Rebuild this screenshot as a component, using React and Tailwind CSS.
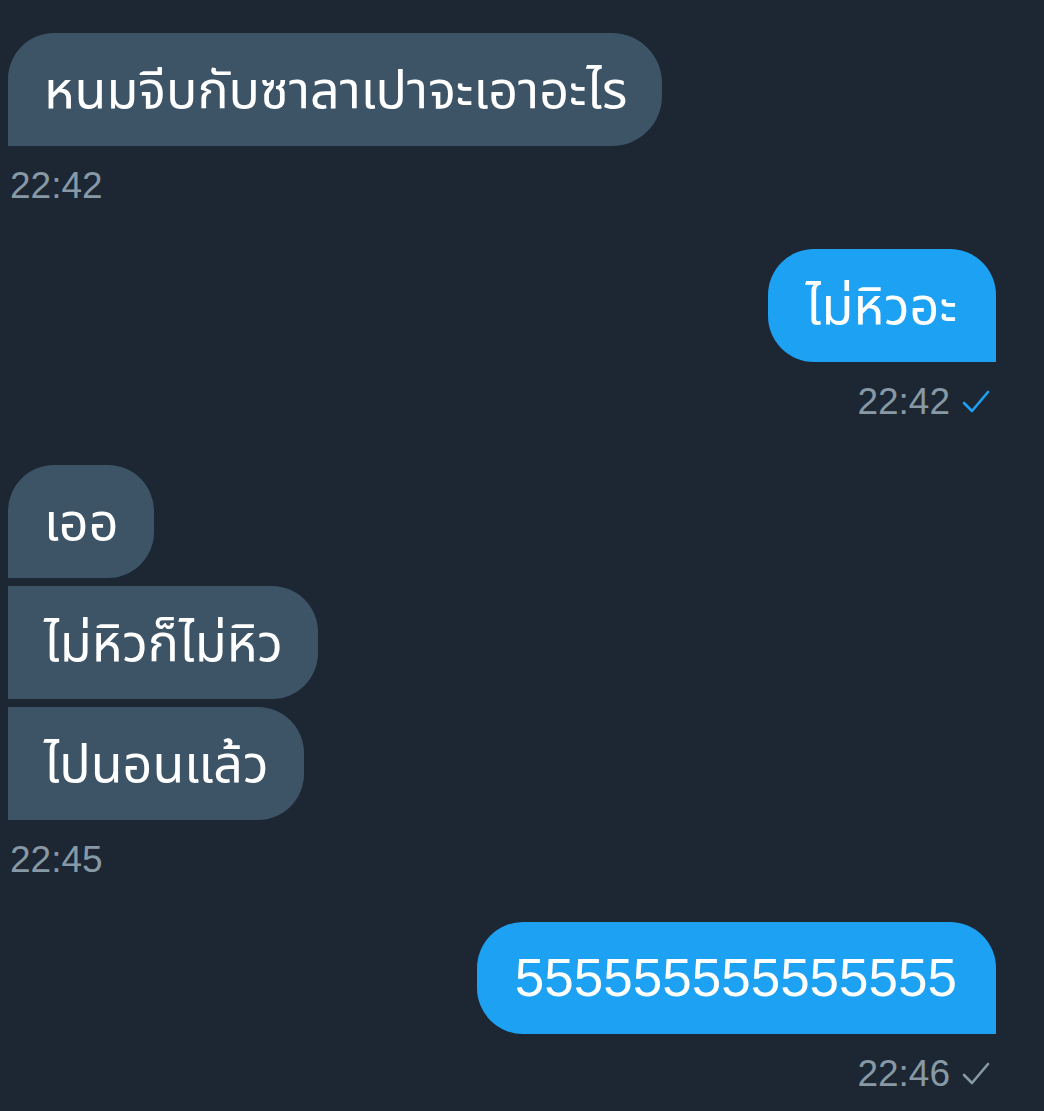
import React from 'react';

const font = { fontFamily: '"Liberation Sans", "Noto Sans Thai", "DejaVu Sans", sans-serif' };

const Check = ({ className }) => (
  <svg viewBox="0 0 28 26" className={className} fill="none" stroke="currentColor" strokeWidth="2.6" strokeLinecap="round" strokeLinejoin="round">
    <polyline points="2,14 10,22 26,3" />
  </svg>
);

const Received = ({ text, shape }) => (
  <div
    className={`h-[113px] flex items-center self-start bg-[#3d5466] text-white text-[52px] pl-[36px] pr-[35px] ${shape}`}
  >
    {text}
  </div>
);

const Sent = ({ text, size }) => (
  <div className={`h-[112px] flex items-center self-end bg-[#1da1f2] text-white pl-[38px] pr-[39px] rounded-tl-[46px] rounded-tr-[46px] rounded-bl-[46px] rounded-br-none ${size}`}>
    {text}
  </div>
);

const Time = ({ time, sent, checkColor }) => (
  <div
    className={`flex items-center gap-[12px] text-[37px] leading-[37px] text-[#8899a6] mt-[21px] ${
      sent ? 'self-end pr-[6px]' : 'self-start pl-[2px]'
    }`}
  >
    <span>{time}</span>
    {sent && <Check className={`w-[28px] h-[26px] ${checkColor}`} />}
  </div>
);

export default function App() {
  return (
    <div className="min-h-[1111px] w-[1044px] bg-[#1c2733] overflow-hidden" style={font}>
      <div className="flex flex-col pl-[8px] pr-[48px] pt-[33px]">
        <Received text="หนมจีบกับซาลาเปาจะเอาอะไร" shape="rounded-tl-[46px] rounded-tr-[50px] rounded-br-[50px] rounded-bl-none" />
        <Time time="22:42" />

        <div className="mt-[45px] flex flex-col">
          <Sent text="ไม่หิวอะ" size="text-[52px] h-[113px]" />
          <Time time="22:42" sent checkColor="text-[#1da1f2]" />
        </div>

        <div className="mt-[45px] flex flex-col gap-[8px]">
          <Received text="เออ" shape="rounded-tl-[46px] rounded-tr-[46px] rounded-br-[46px] rounded-bl-none" />
          <Received text="ไม่หิวก็ไม่หิว" shape="rounded-tr-[46px] rounded-br-[46px] rounded-l-none" />
          <Received text="ไปนอนแล้ว" shape="rounded-tr-[46px] rounded-br-[46px] rounded-l-none" />
        </div>
        <Time time="22:45" />

        <div className="mt-[44px] flex flex-col">
          <Sent text="555555555555555" size="text-[53px]" />
          <Time time="22:46" sent checkColor="text-[#8899a6]" />
        </div>
      </div>
    </div>
  );
}
